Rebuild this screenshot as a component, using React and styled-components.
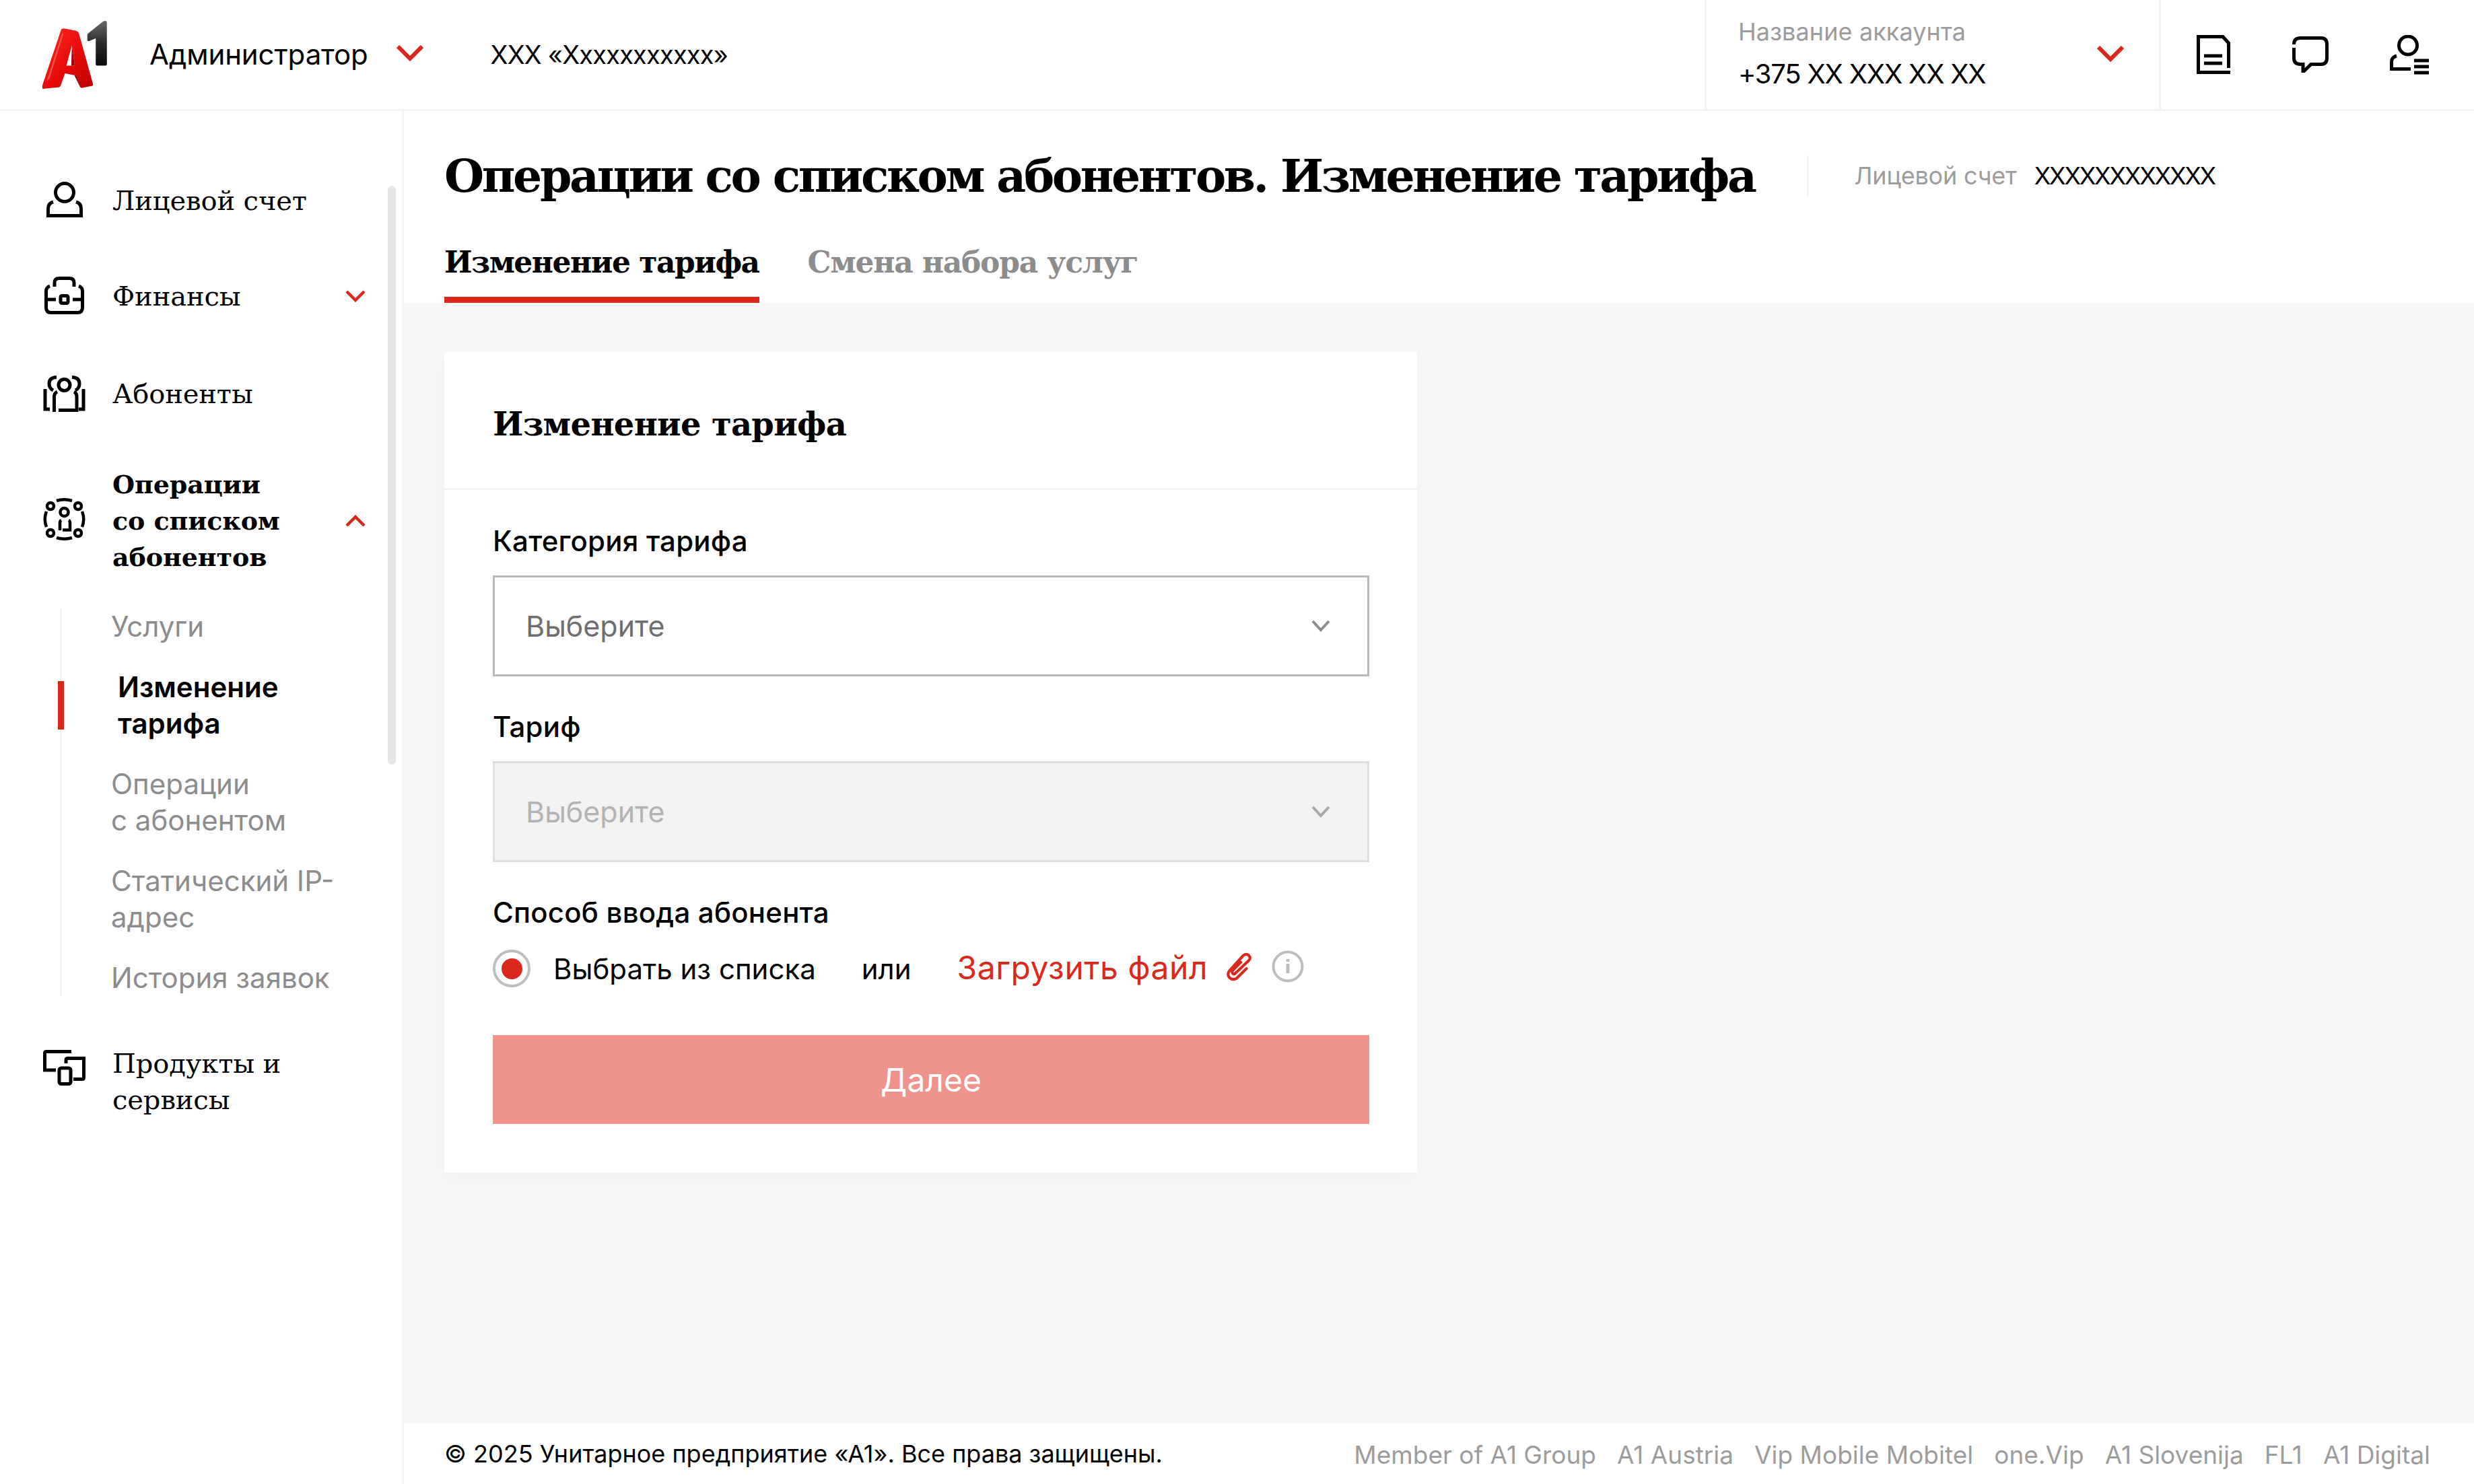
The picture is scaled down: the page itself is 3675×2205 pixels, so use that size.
import React from 'react';
import styled, { createGlobalStyle } from 'styled-components';

const SANS = '"Inter", "Noto Sans", sans-serif';
const SERIF = '"DejaVu Serif", "Liberation Serif", serif';
const RED = '#DA291C';
const LINE = '#f2f2f2';

const Global = createGlobalStyle`
  html, body { margin: 0; padding: 0; background: #fff; }
  * { box-sizing: border-box; }
  body { font-family: ${SANS}; color: #000; }
`;

const Page = styled.div`
  width: 3675px; height: 2205px; display: flex; flex-direction: column; overflow: hidden; background: #fff;
`;
const Header = styled.header`
  height: 165px; flex: none; display: flex; align-items: stretch; border-bottom: 3px solid ${LINE};
`;
const Brand = styled.div`
  display: flex; align-items: center; padding-left: 60px; flex: 1; padding-bottom: 1px;
`;
const RoleText = styled.span`
  font-size: 42px; line-height: 54px; margin-left: 62px; letter-spacing: -0.1px;
`;
const OrgText = styled.span`
  font-size: 38px; line-height: 54px; margin-left: 100px; letter-spacing: -0.8px;
`;
const HeadChevron = styled.svg`
  width: 40px; height: 24px; flex: none; fill: none; stroke: ${RED}; stroke-width: 6px; margin-left: ${p => p.$ml || 0}px; margin-top: -3px;
`;
const Account = styled.div`
  width: 678px; border-left: 3px solid ${LINE}; border-right: 3px solid ${LINE}; display: flex; align-items: center;
  padding: 0 52px 0 47px; justify-content: space-between;
`;
const AccountText = styled.div`
  display: flex; flex-direction: column; margin-top: 1px;
`;
const AccountName = styled.span`
  font-size: 36px; line-height: 48px; color: #9c9c9c; letter-spacing: 0.1px; margin-top: -3px;
`;
const AccountPhone = styled.span`
  font-size: 40px; line-height: 54px; margin-top: 12px; letter-spacing: -1.2px; white-space: nowrap;
`;
const HeaderIcons = styled.div`
  width: 465px; display: flex; align-items: center; padding-left: 53px;
`;
const TopIcon = styled.svg`
  flex: none; fill: none; stroke: #000; stroke-width: 5px; margin-left: ${p => p.$ml || 0}px; margin-top: ${p => p.$mt || 0}px;
`;

const Body = styled.div`
  flex: 1; min-height: 0; display: flex;
`;
const Sidebar = styled.aside`
  width: 600px; flex: none; border-right: 3px solid ${LINE}; position: relative; padding: 106px 54px 0 64px;
`;
const ScrollThumb = styled.div`
  position: absolute; left: 576px; top: 111px; width: 12px; height: 860px; border-radius: 6px; background: #e6e6e6;
`;
const NavRow = styled.div`
  display: flex; align-items: center; margin-top: ${p => p.$mt || 0}px;
`;
const IconBox = styled.div`
  width: 63px; flex: none; display: flex; justify-content: center; margin-top: ${p => p.$mt || 0}px;
`;
const NavIcon = styled.svg`
  fill: none; stroke: #000; stroke-width: 5px; display: block;
`;
const NavLabel = styled.div`
  flex: 1; margin-left: 40px; font-family: ${SERIF}; font-size: ${p => (p.$bold ? 38 : 40)}px; line-height: 54px;
  font-weight: ${p => (p.$bold ? 700 : 400)}; letter-spacing: -0.1px;
`;
const NavChevron = styled.svg`
  width: 30px; height: 18px; flex: none; fill: none; stroke: ${RED}; stroke-width: 4.5px; margin-top: ${p => p.$mt || 0}px;
`;
const SubList = styled.div`
  margin: 49px 0 0 25px; border-left: 3px solid ${LINE}; padding-left: 73px; display: flex; flex-direction: column; gap: 36px;
`;
const SubItem = styled.div`
  position: relative; font-size: 42px; line-height: 54px; color: ${p => (p.$active ? '#000' : '#8c8c8c')};
  font-weight: ${p => (p.$active ? 600 : 400)}; padding-left: ${p => (p.$active ? 10 : 0)}px;
  ${p => p.$active && `
    &::before { content: ''; position: absolute; left: -79px; top: 18px; width: 9px; height: 72px; background: ${RED}; }
  `}
`;

const Main = styled.main`
  flex: 1; min-width: 0; display: flex; flex-direction: column;
`;
const TitleArea = styled.div`
  height: 285px; flex: none; padding: 41px 0 0 60px; display: flex; flex-direction: column;
`;
const TitleRow = styled.div`
  display: flex; align-items: center; height: 110px;
`;
const Title = styled.h1`
  margin: 0; font-family: ${SERIF}; font-weight: 700; font-size: 68px; line-height: 110px; letter-spacing: -3.45px; white-space: nowrap;
`;
const TitleSep = styled.div`
  width: 3px; height: 60px; background: ${LINE}; margin-left: 77px;
`;
const AccLabel = styled.span`
  font-size: 36px; color: #9c9c9c; margin-left: 68px; letter-spacing: -0.2px;
`;
const AccValue = styled.span`
  font-size: 36px; margin-left: 26px; letter-spacing: -2.2px;
`;
const Tabs = styled.div`
  display: flex; gap: 72px; margin-top: auto;
`;
const Tab = styled.div`
  font-family: ${SERIF}; font-weight: 700; font-size: 44px; line-height: 56px; height: 88px; letter-spacing: ${p => (p.$active ? -1.5 : -1.2)}px;
  color: ${p => (p.$active ? '#000' : '#8c8c8c')};
  border-bottom: 9px solid ${p => (p.$active ? RED : 'transparent')};
`;
const Content = styled.div`
  flex: 1; min-height: 0; background: #f7f7f7; padding: 73px 0 0 60px;
`;
const Card = styled.section`
  width: 1445px; background: #fff; box-shadow: 0 10px 30px rgba(0,0,0,0.03);
`;
const CardHead = styled.div`
  height: 205px; border-bottom: 3px solid ${LINE}; padding: 12px 72px 0; display: flex; align-items: center;
`;
const CardTitle = styled.h2`
  margin: 0; font-family: ${SERIF}; font-weight: 700; font-size: 48px; letter-spacing: -0.7px;
`;
const Form = styled.form`
  padding: 49px 71px 72px 72px;
`;
const Label = styled.div`
  font-size: 42px; line-height: 54px; font-weight: 500; letter-spacing: 0.2px; margin-bottom: ${p => p.$mb || 24}px;
`;
const Select = styled.div`
  height: 150px; display: flex; align-items: center; justify-content: space-between; padding: 0 55px 0 46px;
  border: 3px solid ${p => (p.$disabled ? '#dedede' : '#b8b8b8')};
  background: ${p => (p.$disabled ? '#f2f2f2' : '#fff')};
  color: ${p => (p.$disabled ? '#b3b3b3' : '#6e6e6e')};
  font-size: 43px; margin-bottom: 48px;
`;
const SelectChevron = styled.svg`
  width: 28px; height: 18px; fill: none; stroke: ${p => p.$color}; stroke-width: 4px;
`;
const RadioRow = styled.div`
  display: flex; align-items: center; height: 56px; font-size: 42px;
`;
const Radio = styled.span`
  width: 56px; height: 56px; border-radius: 50%; border: 4px solid #bdbdbd; display: flex; align-items: center; justify-content: center; flex: none;
  &::after { content: ''; width: 31px; height: 31px; border-radius: 50%; background: ${RED}; }
`;
const RadioText = styled.span`
  margin-left: 34px; white-space: nowrap;
`;
const OrText = styled.span`
  margin-left: 68px;
`;
const UploadLink = styled.span`
  margin-left: 68px; color: ${RED}; margin-top: -3px; font-size: 48px; letter-spacing: 0.55px; white-space: nowrap;
`;
const ClipIcon = styled.svg`
  width: 38px; height: 44px; flex: none; margin-left: 27px; margin-top: -6px; fill: none; stroke: ${RED}; stroke-width: 4px; stroke-linecap: round;
`;
const InfoIcon = styled.svg`
  width: 48px; height: 48px; flex: none; margin-left: 30px; margin-top: -6px; fill: none; stroke: #bdbdbd; stroke-width: 4px;
`;
const NextButton = styled.button`
  display: block; width: 100%; height: 132px; margin-top: 71px; border: 0; background: #EE948D; color: #fff; font: 400 48px ${SANS};
`;
const Footer = styled.footer`
  height: 90px; flex: none; background: #fff; padding: 0 65px 0 60px; display: flex; align-items: center; justify-content: space-between;
`;
const Copy = styled.span`
  font-size: 36px; white-space: nowrap;
`;
const FooterLinks = styled.div`
  display: flex; gap: 31px; font-size: 37px; color: #9c9c9c; white-space: nowrap; margin-top: 3px;
`;

const Logo = () => (
  <svg width="100" height="108" viewBox="31 18 96 104" style={{ display: 'block', flex: 'none' }}>
    <defs>
      <linearGradient id="la" x1="0" y1="0" x2="1" y2="1">
        <stop offset="0" stopColor="#ff2a22" />
        <stop offset="0.55" stopColor="#e60a0a" />
        <stop offset="1" stopColor="#b80000" />
      </linearGradient>
      <linearGradient id="lo" x1="0" y1="0" x2="0" y2="1">
        <stop offset="0" stopColor="#6a6a6a" />
        <stop offset="0.5" stopColor="#2a2a2a" />
        <stop offset="1" stopColor="#0c0c0c" />
      </linearGradient>
    </defs>
    <path fill="url(#la)" fillRule="evenodd" d="M34 119 Q33 116 34 113 L60 36 Q61 32 66 33 L82 36 Q85 37 86 40 L106 112 Q107 115 104 115 L90 118 Q88 118 87 115 L83 100 L66 97 L60 114 Q59 117 56 117 Z M68 86 L80 86 L76 57 Z" />
    <path fill="#9c0000" d="M76 57 L80 86 L75 86 Z M66 97 L83 100 L88 117 L79 99 Z" />
    <path fill="#ff7a70" opacity="0.6" d="M40 108 L62 40 L64 40 L44 104 Z" />
    <path fill="url(#lo)" d="M99 40 L120 23 Q126 20 126 25 L126 84 Q126 86 124 86 L112 86 Q110 86 110 84 L110 47 L100 51 Q98 51 98 49 L98 42 Q98 41 99 40 Z" />
  </svg>
);

const Chev = <path d="M2 2 L20 20 L38 2" />;
const NavDown = <path d="M2 2 L15 15 L28 2" />;
const NavUp = <path d="M2 16 L15 3 L28 16" />;

export default function App() {
  return (
    <Page>
      <Global />
      <Header>
        <Brand>
          <Logo />
          <RoleText>Администратор</RoleText>
          <HeadChevron $ml={42} viewBox="0 0 40 24">{Chev}</HeadChevron>
          <OrgText>ХХХ «Ххххххххххх»</OrgText>
        </Brand>
        <Account>
          <AccountText>
            <AccountName>Название аккаунта</AccountName>
            <AccountPhone>+375 ХХ ХХХ ХХ ХХ</AccountPhone>
          </AccountText>
          <HeadChevron viewBox="0 0 40 24">{Chev}</HeadChevron>
        </Account>
        <HeaderIcons>
          <TopIcon width="50" height="58" viewBox="0 0 50 58">
            <path d="M2.5 58 V2.5 H39 L47.5 12 V49" />
            <path d="M0 55.5 H50" />
            <path d="M11 31 H38 M11 42 H38" />
          </TopIcon>
          <TopIcon $ml={92} width="54" height="54" viewBox="0 0 54 54">
            <path d="M2.5 12 Q2.5 2.5 12 2.5 H43 Q51.5 2.5 51.5 12 V32 Q51.5 41.5 43 41.5 H28 L16 53 V41.5 H12 Q2.5 41.5 2.5 32 V17" />
          </TopIcon>
          <TopIcon $ml={91} width="58" height="59" viewBox="0 0 58 59">
            <circle cx="27" cy="15.5" r="13.5" />
            <path d="M10 31 Q2.5 33 2.5 40 V50.5 H31" />
            <path d="M36 38 H58 M36 47 H58 M36 56 H58" />
          </TopIcon>
        </HeaderIcons>
      </Header>
      <Body>
        <Sidebar>
          <ScrollThumb />
          <NavRow>
            <IconBox $mt={-3}>
              <NavIcon width="54" height="54" viewBox="0 0 54 54">
                <circle cx="27" cy="16" r="13.5" />
                <path d="M10 30 Q2.5 32 2.5 40 V50.5 H51.5 V40 Q51.5 32 44 30" />
              </NavIcon>
            </IconBox>
            <NavLabel>Лицевой счет</NavLabel>
          </NavRow>
          <NavRow $mt={88}>
            <IconBox $mt={-2}>
              <NavIcon width="59" height="56" viewBox="0 0 59 56">
                <path d="M15 15 V9 Q15 2.5 22 2.5 H37 Q44 2.5 44 9 V15" />
                <path d="M8 14 Q2.5 16 2.5 22 V46 Q2.5 53.5 10 53.5 H49 Q56.5 53.5 56.5 46 V22 Q56.5 16 51 14" />
                <path d="M2.5 34 H17 M42 34 H56.5" />
                <rect x="24" y="28.5" width="11" height="11" rx="2" />
              </NavIcon>
            </IconBox>
            <NavLabel>Финансы</NavLabel>
            <NavChevron viewBox="0 0 30 18">{NavDown}</NavChevron>
          </NavRow>
          <NavRow $mt={91}>
            <IconBox>
              <NavIcon width="63" height="54" viewBox="0 0 63 54">
                <circle cx="31.5" cy="14" r="8.5" />
                <path d="M20 2.5 Q9 3 9 12 Q9 19 15 22 M43 2.5 Q54 3 54 12 Q54 19 48 22" />
                <path d="M16.5 54 V32 Q16.5 26 21 24 M46 24 Q50 26 50 32 V51.5 H23" />
                <path d="M3 20 V50 H10 M60 20 V50 H53" />
              </NavIcon>
            </IconBox>
            <NavLabel>Абоненты</NavLabel>
          </NavRow>
          <NavRow $mt={81}>
            <IconBox $mt={-6}>
              <NavIcon width="63" height="63" viewBox="0 0 63 63" style={{ strokeWidth: 4.5 }}>
                <path d="M20 4 Q31.5 0.5 43 4 M20 59 Q31.5 62.5 43 59 M5 20 Q0.5 31.5 5 43 M58 20 Q62.5 31.5 58 43" />
                <circle cx="11" cy="12" r="5" />
                <circle cx="52" cy="12" r="5" />
                <circle cx="11" cy="52" r="5" />
                <circle cx="52" cy="52" r="5" />
                <circle cx="31.5" cy="21" r="6" />
                <path d="M25 48 V37 Q25 34 27 33 M38 33 Q40 34 40 37 V47.5 H29" />
              </NavIcon>
            </IconBox>
            <NavLabel $bold>Операции<br />со списком<br />абонентов</NavLabel>
            <NavChevron viewBox="0 0 30 18">{NavUp}</NavChevron>
          </NavRow>
          <SubList>
            <SubItem>Услуги</SubItem>
            <SubItem $active>Изменение<br />тарифа</SubItem>
            <SubItem>Операции<br />с абонентом</SubItem>
            <SubItem>Статический IP-<br />адрес</SubItem>
            <SubItem>История заявок</SubItem>
          </SubList>
          <NavRow $mt={73}>
            <IconBox $mt={-42}>
              <NavIcon width="63" height="53" viewBox="0 0 63 53">
                <path d="M42 2.5 H5 Q2.5 2.5 2.5 5 V30 H19" />
                <path d="M34 20 V15 Q34 12.5 37 12.5 H60.5 V41 Q60.5 43.5 58 43.5 H45" />
                <rect x="24" y="27" width="17" height="23.5" rx="3" />
              </NavIcon>
            </IconBox>
            <NavLabel>Продукты и<br />сервисы</NavLabel>
          </NavRow>
        </Sidebar>
        <Main>
          <TitleArea>
            <TitleRow>
              <Title>Операции со списком абонентов. Изменение тарифа</Title>
              <TitleSep />
              <AccLabel>Лицевой счет</AccLabel>
              <AccValue>ХХХХХХХХХХХХ</AccValue>
            </TitleRow>
            <Tabs>
              <Tab $active>Изменение тарифа</Tab>
              <Tab>Смена набора услуг</Tab>
            </Tabs>
          </TitleArea>
          <Content>
            <Card>
              <CardHead><CardTitle>Изменение тарифа</CardTitle></CardHead>
              <Form>
                <Label>Категория тарифа</Label>
                <Select>Выберите<SelectChevron $color="#8c8c8c" viewBox="0 0 28 18"><path d="M2 2 L14 15 L26 2" /></SelectChevron></Select>
                <Label $mb={24}>Тариф</Label>
                <Select $disabled>Выберите<SelectChevron $color="#a8a8a8" viewBox="0 0 28 18"><path d="M2 2 L14 15 L26 2" /></SelectChevron></Select>
                <Label $mb={28}>Способ ввода абонента</Label>
                <RadioRow>
                  <Radio />
                  <RadioText>Выбрать из списка</RadioText>
                  <OrText>или</OrText>
                  <UploadLink>Загрузить файл</UploadLink>
                  <ClipIcon viewBox="0 0 36 42">
                    <path d="M29 24 L15 38 Q10 41 5 37 Q1 32 5 27 L24 6 Q28 2 32 5 Q36 9 32 13 L13 31 Q10 33 9 30 Q8 28 10 26 L21 15" />
                  </ClipIcon>
                  <InfoIcon viewBox="0 0 48 48">
                    <circle cx="24" cy="24" r="21.5" />
                    <path d="M24 13 V17 M24 20 V34" strokeWidth="5" />
                  </InfoIcon>
                </RadioRow>
                <NextButton type="button">Далее</NextButton>
              </Form>
            </Card>
          </Content>
          <Footer>
            <Copy>© 2025 Унитарное предприятие «А1». Все права защищены.</Copy>
            <FooterLinks>
              <span>Member of A1 Group</span>
              <span>A1 Austria</span>
              <span>Vip Mobile Mobitel</span>
              <span>one.Vip</span>
              <span>A1 Slovenija</span>
              <span>FL1</span>
              <span>A1 Digital</span>
            </FooterLinks>
          </Footer>
        </Main>
      </Body>
    </Page>
  );
}
